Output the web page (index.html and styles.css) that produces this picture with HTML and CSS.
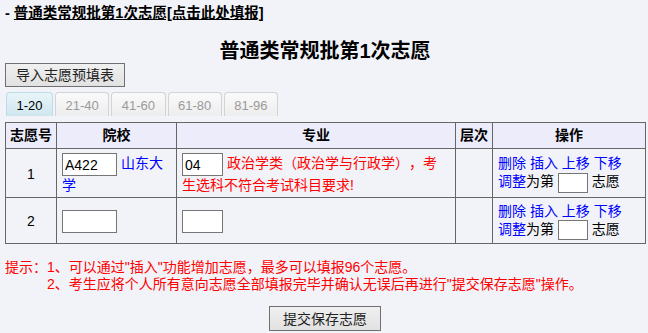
FILE: index.html
```
<!DOCTYPE html>
<html lang="zh-CN">
<head>
<meta charset="utf-8">
<title>普通类常规批第1次志愿</title>
<link rel="stylesheet" href="styles.css">
</head>
<body>
<div class="page">
  <div class="toplink">- <a href="#">普通类常规批第1次志愿[点击此处填报]</a></div>
  <h1 class="title">普通类常规批第1次志愿</h1>
  <button class="btn btn-import" type="button">导入志愿预填表</button>
  <ul class="tabs">
    <li class="tab active">1-20</li>
    <li class="tab">21-40</li>
    <li class="tab">41-60</li>
    <li class="tab">61-80</li>
    <li class="tab">81-96</li>
  </ul>
  <table class="grid">
    <colgroup>
      <col class="c-num"><col class="c-school"><col class="c-major"><col class="c-level"><col class="c-op">
    </colgroup>
    <thead>
      <tr><th>志愿号</th><th>院校</th><th>专业</th><th>层次</th><th>操作</th></tr>
    </thead>
    <tbody>
      <tr>
        <td class="num">1</td>
        <td><input class="inp inp-school" type="text" value="A422"> <a class="lnk" href="#">山东大学</a></td>
        <td class="major"><input class="inp inp-major" type="text" value="04"> <span class="err">政治学类（政治学与行政学），考生选科不符合考试科目要求!</span></td>
        <td></td>
        <td class="op">
          <div class="op-line"><a class="lnk" href="#">删除</a> <a class="lnk" href="#">插入</a> <a class="lnk" href="#">上移</a> <a class="lnk" href="#">下移</a></div>
          <div class="op-line"><a class="lnk" href="#">调整</a>为第 <input class="inp inp-order" type="text"> 志愿</div>
        </td>
      </tr>
      <tr>
        <td class="num">2</td>
        <td><input class="inp inp-school" type="text"></td>
        <td class="major"><input class="inp inp-major" type="text"></td>
        <td></td>
        <td class="op">
          <div class="op-line"><a class="lnk" href="#">删除</a> <a class="lnk" href="#">插入</a> <a class="lnk" href="#">上移</a> <a class="lnk" href="#">下移</a></div>
          <div class="op-line"><a class="lnk" href="#">调整</a>为第 <input class="inp inp-order" type="text"> 志愿</div>
        </td>
      </tr>
    </tbody>
  </table>
  <div class="hint">
    <span class="hint-label">提示：</span>
    <div class="hint-lines">
      <div>1、可以通过"插入"功能增加志愿，最多可以填报96个志愿。</div>
      <div>2、考生应将个人所有意向志愿全部填报完毕并确认无误后再进行"提交保存志愿"操作。</div>
    </div>
  </div>
  <div class="submit-row">
    <button class="btn btn-submit" type="button">提交保存志愿</button>
  </div>
</div>
</body>
</html>
```

FILE: styles.css
```
html, body {
  margin: 0;
  padding: 0;
}
body {
  background: #f2f3f8;
  font-family: "Liberation Sans", "Noto Sans CJK SC", sans-serif;
  font-size: 14px;
  color: #000;
  text-spacing-trim: space-all;
}
.page {
  width: 640px;
  padding: 4px 3px 0 5px;
}
.toplink {
  height: 18px;
  line-height: 18px;
  font-size: 14.5px;
  font-weight: bold;
}
.toplink a {
  color: #000;
  text-decoration: underline;
}
.title {
  margin: 17px 0 0;
  font-size: 20px;
  line-height: 24px;
  font-weight: bold;
  text-align: center;
}
.btn {
  display: block;
  box-sizing: border-box;
  height: 24px;
  padding: 0 10px;
  border: 1px solid #707070;
  border-radius: 0;
  background: linear-gradient(#f0f0f0, #e1e1e1);
  font-family: "Liberation Sans", "Noto Sans CJK SC", sans-serif;
  font-size: 14px;
  line-height: 20px;
  color: #222;
}
.tabs {
  display: flex;
  gap: 2px;
  margin: 5px 0 0 1px;
  padding: 0;
  list-style: none;
}
.tab {
  box-sizing: border-box;
  height: 24px;
  line-height: 25px;
  padding: 0 9.5px;
  border: 1px solid #d3d3d3;
  border-bottom: none;
  border-radius: 4px 4px 0 0;
  background: linear-gradient(#fafafa, #ededed);
  font-size: 13px;
  color: #9a9a9a;
}
.tab.active {
  border-color: #bcdde8;
  background: linear-gradient(#e9f5f9, #cfe6ee);
  color: #000;
}
.grid {
  margin-top: 6px;
  border-collapse: collapse;
  table-layout: fixed;
  width: 641px;
}
.c-num { width: 51px; }
.c-school { width: 120px; }
.c-major { width: 279px; }
.c-level { width: 37px; }
.c-op { width: 153px; }
.grid th,
.grid td {
  border: 1px solid #666;
}
.grid th {
  height: 25px;
  padding: 0;
  background: #ececfb;
  font-weight: bold;
  line-height: 25px;
  text-align: center;
}
.grid td {
  padding: 4px 5px 3px;
  line-height: 18px;
  vertical-align: middle;
}
.grid td.major {
  padding-right: 8px;
}
.grid td.num {
  text-align: center;
}
.op-line {
  white-space: nowrap;
}
.inp {
  box-sizing: border-box;
  height: 23px;
  margin: 0;
  padding: 0 2px;
  border: 1px solid #767676;
  background: #fff;
  font-family: "Liberation Sans", "Noto Sans CJK SC", sans-serif;
  font-size: 14px;
  vertical-align: middle;
}
.inp-school { width: 55px; }
.inp-major { width: 41px; }
.inp-order {
  width: 30px;
  height: 20px;
}
.lnk {
  color: #0000ff;
  text-decoration: none;
}
.err {
  color: #ff0000;
}
.hint {
  display: flex;
  margin-top: 15px;
  line-height: 17px;
  color: #ff0000;
}
.submit-row {
  display: flex;
  justify-content: center;
  margin-top: 13px;
}
.btn-submit {
  height: 25px;
  padding: 0 13px;
}
```
